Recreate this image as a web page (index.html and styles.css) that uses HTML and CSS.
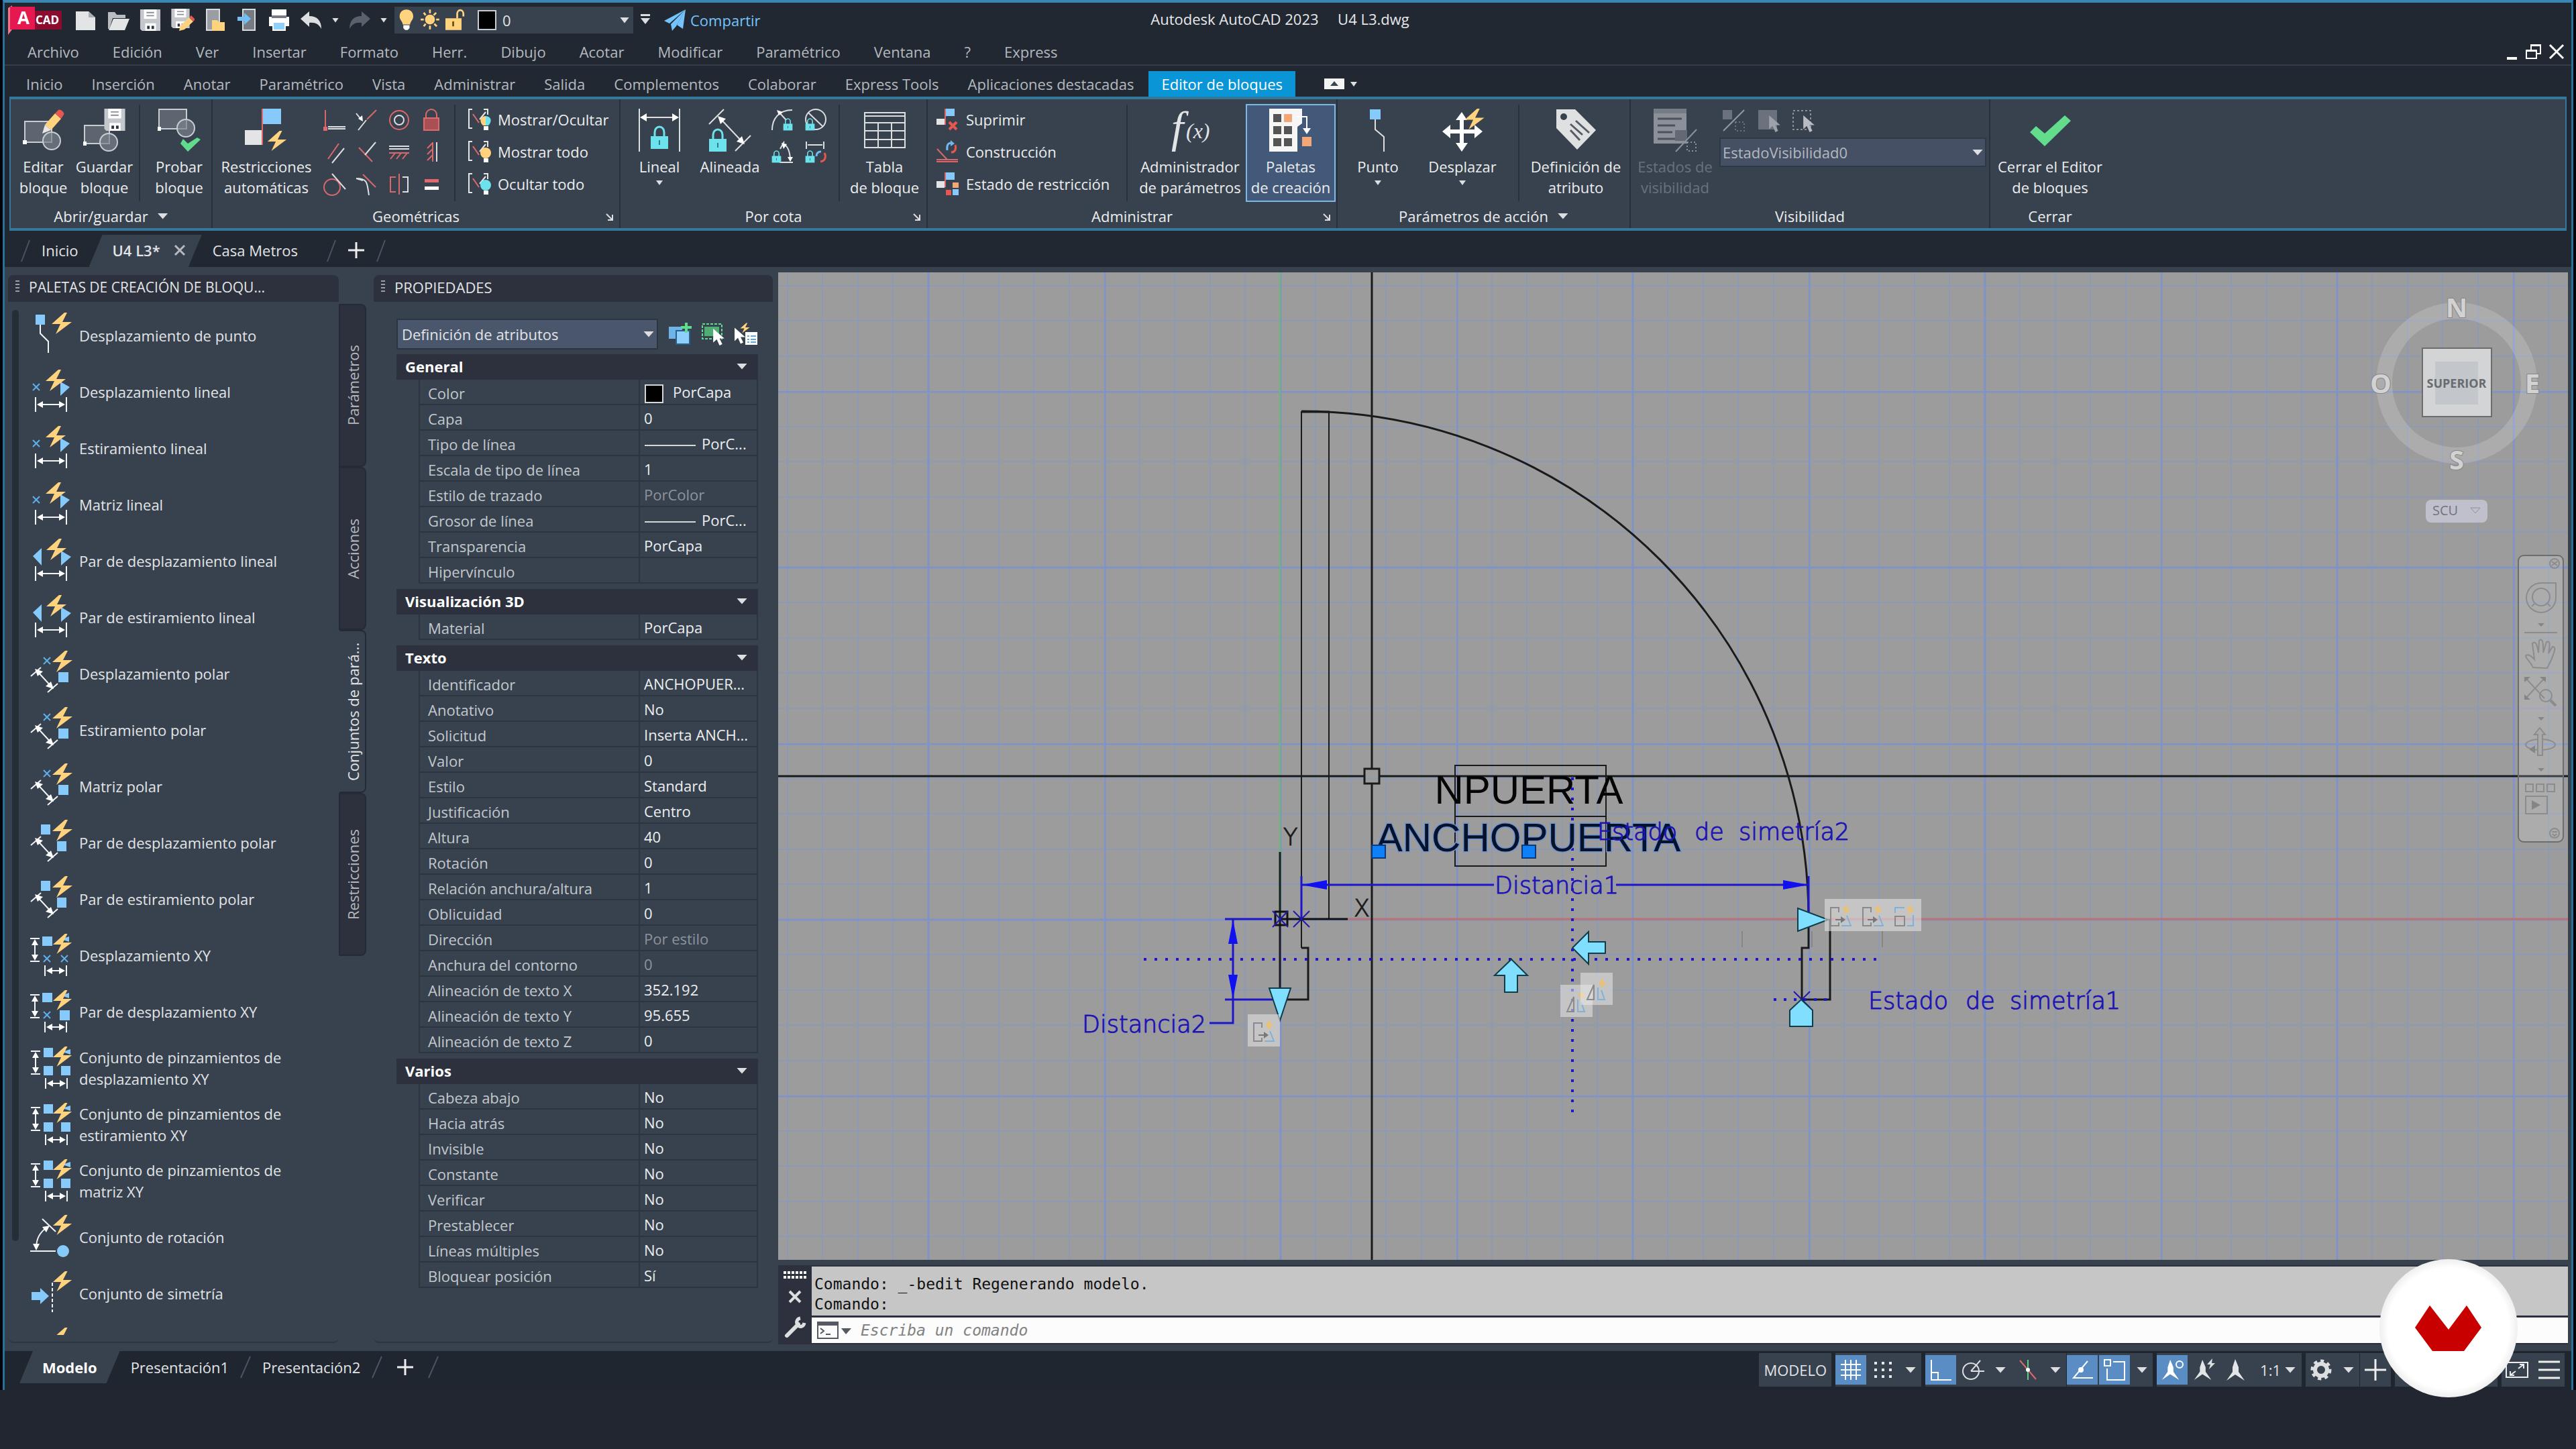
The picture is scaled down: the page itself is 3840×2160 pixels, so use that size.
FILE: index.html
```html
<!DOCTYPE html>
<html lang="es">
<head>
<meta charset="utf-8">
<title>Autodesk AutoCAD 2023 - U4 L3.dwg</title>
<link rel="stylesheet" href="styles.css">
</head>
<body>
<svg class="defs" aria-hidden="true">
  <defs>
    <symbol id="bolt" viewBox="0 0 32 34"><path fill="#ffd27d" d="M20 1L1 18h13L7 33l24-18H17l7-14z"/></symbol>
    <symbol id="floppy" viewBox="0 0 32 34"><path fill="#c4c7cb" d="M0 0h32v34H3l-3-3z"/><path fill="#fff" d="M6 0h20v15H6z"/><path stroke="#8a8f96" stroke-width="2" d="M10 5h12M10 10h12"/><path fill="#fff" d="M8 22h17v12H8z"/><path fill="#30363f" d="M11 26h4v5h-4zM18 26h4v5h-4z"/></symbol>
    <symbol id="lock" viewBox="0 0 28 36"><path fill="none" stroke="#6ce2ec" stroke-width="3" d="M7 17V10a7 8 0 0 1 14 0v7"/><path fill="#6ce2ec" d="M1 16h26v19H1z"/><path stroke="#2a7d88" stroke-width="2" d="M14 22v7"/></symbol>
    <symbol id="bracket" viewBox="0 0 36 36"><path fill="none" stroke="#e4e6e8" stroke-width="2" d="M7 3H2v28h5M24 3h6v8M18 18l9-11"/><path stroke="#e0696b" stroke-width="2" d="M8 10l9 13"/></symbol>
    <symbol id="cursor" viewBox="0 0 16 24"><path d="M0 0v20l5-5 4 9 4-2-4-8h7z"/></symbol>

    <symbol id="p-point" viewBox="0 0 64 72"><path fill="#86c9fb" d="M8 5h14v15H8z"/><path class="ln" d="M15 20v13l12 12v17"/><use href="#bolt" x="31" y="1" width="32" height="34"/></symbol>
    <symbol id="hdim" viewBox="0 0 64 72"><path class="ln" d="M8 44v22M54 44v22M12 55h38"/><path fill="#fff" d="M10 55l9-5v10zM52 55l-9-5v10z"/></symbol>
    <symbol id="p-lineal" viewBox="0 0 64 72"><path stroke="#5fb0ea" stroke-width="2" d="M4 24l10 10M14 24L4 34"/><path fill="#86c9fb" d="M45 21l14 8-14 13z"/><use href="#bolt" x="22" y="2" width="32" height="34"/><use href="#hdim"/></symbol>
    <symbol id="p-pair" viewBox="0 0 64 72"><path fill="#86c9fb" d="M17 17v26L4 29zM46 21l15 9-15 13z"/><use href="#bolt" x="23" y="2" width="32" height="34"/><use href="#hdim"/></symbol>
    <symbol id="pdim" viewBox="0 0 64 72"><path class="ln" d="M1 40l15-13M26 64l15-13M9 31l24 26"/><path fill="#fff" d="M7 29l12 4-8 7zM35 59l-12-4 8-7z"/></symbol>
    <symbol id="p-polar" viewBox="0 0 64 72"><path stroke="#5fb0ea" stroke-width="2" d="M20 12l10 10M30 12L20 22"/><path fill="#86c9fb" d="M42 34h15v15H42z"/><use href="#bolt" x="32" y="1" width="32" height="34"/><use href="#pdim"/></symbol>
    <symbol id="p-ppolar" viewBox="0 0 64 72"><path fill="#86c9fb" d="M16 9h14v15H16zM40 34h14v15H40z"/><use href="#bolt" x="32" y="1" width="32" height="34"/><use href="#pdim"/></symbol>
    <symbol id="xydim" viewBox="0 0 64 72"><path class="ln" d="M0 11h14M0 45h14M7 14v28M22 51v16M54 51v16M26 59h24"/><path fill="#fff" d="M7 12l-5 9h10zM7 44l-5-9h10zM24 59l9-5v10zM52 59l-9-5v10z"/></symbol>
    <symbol id="p-xy" viewBox="0 0 64 72"><path fill="#86c9fb" d="M18 8h15v14H18zM46 12l12-4v8z"/><path stroke="#5fb0ea" stroke-width="2" d="M20 36l10 10M30 36L20 46M46 36l10 10M56 36L46 46"/><use href="#bolt" x="32" y="3" width="32" height="32"/><use href="#xydim"/></symbol>
    <symbol id="p-pxy" viewBox="0 0 64 72"><path fill="#86c9fb" d="M18 8h15v14H18zM46 12l12-4v8zM44 34h15v15H44z"/><path stroke="#5fb0ea" stroke-width="2" d="M20 36l10 10M30 36L20 46"/><use href="#bolt" x="32" y="3" width="32" height="32"/><use href="#xydim"/></symbol>
    <symbol id="p-cxy" viewBox="0 0 64 72"><path fill="#86c9fb" d="M20 6h14v14H20zM48 12l12-4v8zM20 33h14v14H20zM46 33h14v14H46z"/><use href="#bolt" x="32" y="3" width="32" height="32"/><use href="#xydim" x="1"/></symbol>
    <symbol id="p-rot" viewBox="0 0 64 72"><path class="ln" d="M0 57h38M18 9l20 19M9 52c0-14 6-24 17-31"/><path fill="#fff" d="M9 56l-5-10h10zM29 19l-11 2 6 8z"/><circle cx="49" cy="57" r="9" fill="#86c9fb"/><use href="#bolt" x="32" y="2" width="32" height="32"/></symbol>
    <symbol id="p-sim" viewBox="0 0 64 72"><path fill="#86c9fb" d="M2 34h13v-6l13 12-13 12v-6H2z"/><path class="ln" stroke-dasharray="5 3" d="M33 20v44"/><use href="#bolt" x="32" y="2" width="32" height="32"/></symbol>
    <symbol id="act" viewBox="0 0 48 48"><path fill="#e8e8e8" fill-opacity=".55" d="M0 0h48v48H0z"/><path fill="none" stroke="#8a8a8a" stroke-width="2" d="M21 20v-7H9v27h12v-5"/><path stroke="#777" stroke-width="2" d="M16 31h10"/><path fill="#777" d="M24 26l7 5-7 5z"/><path fill="none" stroke="#7fb2da" stroke-width="2" d="M33 25l6 15H25"/><path fill="#efc06a" d="M33 8l-7 9h5l-3 7 11-9h-6z"/></symbol>
    <symbol id="act-scale" viewBox="0 0 48 48"><path fill="#e8e8e8" fill-opacity=".55" d="M0 0h48v48H0z"/><path fill="none" stroke="#8a8a8a" stroke-width="2" d="M9 26h14v14H9z"/><path fill="none" stroke="#7fb2da" stroke-width="2" d="M9 21v-8h14M36 24v16h-9"/><path fill="#efc06a" d="M33 8l-7 9h5l-3 7 11-9h-6z"/></symbol>
    <symbol id="act-flip" viewBox="0 0 48 48"><path fill="#e8e8e8" fill-opacity=".55" d="M0 0h48v48H0z"/><path fill="none" stroke="#8a8a8a" stroke-width="2" d="M20 18v22H10z"/><path fill="none" stroke="#7fb2da" stroke-width="2" d="M26 22v18h10l-5-14"/><path fill="#efc06a" d="M34 8l-8 9h6l-3 7 10-9h-5z"/></symbol>
    <symbol id="person" viewBox="0 0 36 36"><path fill="currentColor" d="M16 2l5 12v7l9 13-14-9-13 9 9-13v-7z"/></symbol>
  </defs>
</svg>

<div class="frame">
<div class="app">

  <header class="titlebar">
    <button class="logo" aria-label="Menú de la aplicación"><svg width="80" height="44" viewBox="0 0 80 44"><path fill="#8c0c30" d="M38 8h42v28H38z"/><path fill="#f0768f" d="M0 4l6-4v36l-6 8z"/><path fill="#e5194f" d="M3 2h37v34H3z"/><text x="14" y="28" font-size="26" font-weight="700" fill="#fff">A</text><text x="41" y="28" font-size="17" font-weight="700" fill="#fff">CAD</text></svg></button>
    <div class="quick">
      <button aria-label="Nuevo"><svg width="36" height="36"><path fill="#e3e4e5" d="M3 5h19l10 9v19H3z"/><path fill="#a9adb2" d="M22 5l10 9H22z"/></svg></button>
      <button aria-label="Abrir"><svg width="36" height="36"><path fill="#b9bcc0" d="M3 6h10l3 4h13v5H10L5 31H3z"/><path fill="#e3e4e5" d="M11 16h24l-7 17H4z"/></svg></button>
      <button aria-label="Guardar"><svg width="36" height="36"><use href="#floppy" x="2" y="2" width="32" height="32"/></svg></button>
      <button aria-label="Guardar como"><svg width="36" height="36"><use href="#floppy" x="1" y="1" width="28" height="29"/><path fill="#ffd27d" d="M13 34l2-8 13-12 6 6-13 12z"/><path fill="#e8574f" d="M28 14l3-3 6 6-3 3z"/></svg></button>
      <button aria-label="Abrir desde web"><svg width="36" height="36"><path fill="#9a9ea4" stroke="#d9dbdd" stroke-width="2" d="M6 2h19v31H6z"/><path fill="#ffd27d" d="M14 18h8l2 3h9v13H14z"/></svg></button>
      <button aria-label="Guardar en web"><svg width="36" height="36"><path fill="#777c84" stroke="#d9dbdd" stroke-width="2" d="M12 2h18v31H12z"/><path fill="#6fc0fa" d="M4 13h10V7l10 9-10 9v-6H4z"/></svg></button>
      <button aria-label="Trazar"><svg width="36" height="36"><path fill="#fff" d="M7 2h22v9H7zM3 13h30v14H3z"/><path fill="#777c84" d="M7 11h22v4H7z"/><path fill="#8fd0ff" stroke="#fff" stroke-width="2" d="M9 21h18v12H9z"/></svg></button>
      <button aria-label="Deshacer"><svg width="36" height="36"><path fill="#dcdee0" d="M2 16L15 5v7c12 0 18 7 18 19-4-7-9-10-18-9v6z"/></svg></button>
      <button aria-label="Lista deshacer" class="mini"><i class="tri"></i></button>
      <button aria-label="Rehacer"><svg width="36" height="36"><path fill="#5a616c" d="M34 16L21 5v7C9 12 3 19 3 31c4-7 9-10 18-9v6z"/></svg></button>
      <button aria-label="Lista rehacer" class="mini"><i class="tri"></i></button>
    </div>
    <div class="layerbox">
      <svg width="130" height="36" viewBox="0 0 130 36"><path fill="#ffd27d" d="M15 1c8 0 11 6 11 11 0 6-5 8-5 13H9C9 20 4 18 4 12 4 7 7 1 15 1z"/><path fill="#fff" d="M10 26h10v5l-3 3h-4l-3-3z"/><circle cx="53" cy="17" r="8" fill="#ffd27d"/><path stroke="#ffd27d" stroke-width="3" d="M53 1v6M53 27v6M38 17h5M63 17h5M43 6l3 4M60 24l4 4M63 6l-4 4M43 28l3-4"/><path fill="#ffd27d" d="M78 15h26v19H78z"/><path fill="none" stroke="#ffd27d" stroke-width="3" d="M97 15V8a5 6 0 0 1 10 0v4"/><path fill="#6b4f12" d="M89 20h3v8h-3z"/></svg>
      <span class="swatch"></span>
      <select aria-label="Capa actual"><option>0</option></select><i class="tri"></i>
    </div>
    <button class="more" aria-label="Personalizar barra"><svg width="20" height="20"><path fill="#dcdee0" d="M3 1h14v3H3zM3 7h14l-7 9z"/></svg></button>
    <a class="share" href="#"><svg width="34" height="34"><path fill="#74c4fb" d="M33 1L1 18l8 4zM33 1L11 23l2 10 6-7zM33 1l-4 29-9-6z"/></svg>Compartir</a>
    <div class="doc-title">Autodesk AutoCAD 2023 &nbsp;&nbsp;&nbsp; U4 L3.dwg</div>
  </header>

  <nav class="menubar" aria-label="Menús">
    <button>Archivo</button><button>Edición</button><button>Ver</button><button>Insertar</button><button>Formato</button><button>Herr.</button><button>Dibujo</button><button>Acotar</button><button>Modificar</button><button>Paramétrico</button><button>Ventana</button><button>?</button><button>Express</button>
    <div class="wincontrols">
      <button aria-label="Minimizar"><svg width="24" height="30"><path fill="#fff" d="M5 23h15v4H5z"/></svg></button>
      <button aria-label="Restaurar"><svg width="26" height="30"><path fill="none" stroke="#fff" stroke-width="2" d="M9 12V5h14v13h-5M2 13h15v12H2z"/><path fill="#fff" d="M9 4h15v3H9zM2 12h16v3H2z"/></svg></button>
      <button aria-label="Cerrar"><svg width="26" height="30"><path stroke="#fff" stroke-width="3" d="M3 5l20 20M23 5L3 25"/></svg></button>
    </div>
  </nav>

  <nav class="ribbon-tabs" aria-label="Fichas">
    <button>Inicio</button><button>Inserción</button><button>Anotar</button><button>Paramétrico</button><button>Vista</button><button>Administrar</button><button>Salida</button><button>Complementos</button><button>Colaborar</button><button>Express Tools</button><button>Aplicaciones destacadas</button><button class="active">Editor de bloques</button>
    <button class="collapse" aria-label="Minimizar cinta"><svg width="54" height="20"><path fill="#f4f4f4" d="M1 2h30v16H1z"/><path fill="#3a4350" d="M16 6l6 7H10z"/><path fill="#dcdee0" d="M40 7h10l-5 7z"/></svg></button>
  </nav>

  <section class="ribbon">
    <div class="panel w301">
      <div class="panel-body">
        <button class="big w92"><svg class="ic"><path fill="#5d6570" stroke="#c9ccd0" stroke-width="2" d="M4 21h40v31H4z"/><circle cx="44" cy="50" r="13" fill="#7a818b" fill-opacity=".7" stroke="#c9ccd0" stroke-width="2"/><path fill="#fff" d="M1 49h6v6H1z"/><path fill="#ffd27d" d="M34 26l15-17 9 8-15 17z"/><path fill="#e6e6e6" d="M34 26l9 8-13 5z"/><path fill="#e8574f" d="M49 9l5-5c3-2 10 4 8 7l-4 6z"/></svg>Editar<br>bloque</button>
        <button class="big w92"><svg class="ic"><path fill="#5d6570" stroke="#c9ccd0" stroke-width="2" d="M2 27h37v27H2z"/><circle cx="38" cy="52" r="13" fill="#7a818b" fill-opacity=".7" stroke="#c9ccd0" stroke-width="2"/><path fill="#fff" d="M0 51h5v6H0z"/><use href="#floppy" x="31" y="2" width="32" height="33"/></svg>Guardar<br>bloque</button>
        <hr>
        <button class="big w108"><svg class="ic"><path fill="#5d6570" stroke="#c9ccd0" stroke-width="2" d="M2 3h41v29H2z"/><circle cx="42" cy="31" r="13" fill="#7a818b" fill-opacity=".7" stroke="#c9ccd0" stroke-width="2"/><path fill="#fff" d="M0 29h5v6H0z"/><path fill="#5fdc8c" d="M34 54l4-7 7 7 14-9 5 3-19 18z"/></svg>Probar<br>bloque</button>
      </div>
      <div class="panel-title">Abrir/guardar <i class="tri lg"></i></div>
    </div>

    <div class="panel w608">
      <div class="panel-body">
        <button class="big w160"><svg class="ic"><path fill="#86c9fb" d="M27 2h27v23H27z"/><path fill="#e3e4e5" d="M0 34h25v22H0z"/><path stroke="#e0696b" stroke-width="2" d="M26 2v54"/><use href="#bolt" x="32" y="34" width="32" height="32"/></svg>Restricciones<br>automáticas</button>
        <div class="grid4">
          <button aria-label="Coincidente"><svg class="sm"><path class="rd" d="M4 3v26"/><path fill="#e0696b" d="M1 28h6v6H1z"/><path class="wt" d="M8 31h26M8 28h26"/></svg></button>
          <button aria-label="Colineal"><svg class="sm"><path class="wt" d="M2 8l8 10M5 33l12-15"/><path class="rd" d="M18 17L32 3"/><path fill="#fff" d="M12 20l-1-9-6 5z"/></svg></button>
          <button aria-label="Concéntrica"><svg class="sm"><circle class="rd" cx="18" cy="18" r="14"/><circle class="wt" cx="18" cy="18" r="7"/></svg></button>
          <button aria-label="Fija"><svg class="sm"><path class="rd" d="M10 16V10a8 8 0 0 1 16 0v6"/><path fill="#a94f55" stroke="#e0696b" stroke-width="2" d="M7 15h22v18H7z"/></svg></button>
          <button aria-label="Paralela"><svg class="sm"><path class="rd" d="M8 28L24 5"/><path class="wt" d="M14 34L32 12"/></svg></button>
          <button aria-label="Perpendicular"><svg class="sm"><path class="rd" d="M6 11l20 21"/><path class="wt" d="M15 22L31 3"/></svg></button>
          <button aria-label="Horizontal"><svg class="sm"><path class="wt" d="M3 9h30M3 13h30"/><path class="rd" d="M3 19h30M12 19L5 28M21 19l-7 9M30 19l-7 9"/></svg></button>
          <button aria-label="Vertical"><svg class="sm"><path class="rd" d="M20 3v29M20 4l-8 8M20 13l-8 8M20 22l-8 8"/><path class="wt" d="M26 3v29"/></svg></button>
          <button aria-label="Tangente"><svg class="sm"><circle class="rd" cx="14" cy="22" r="12"/><path class="wt" d="M14 2l20 23"/></svg></button>
          <button aria-label="Suave"><svg class="sm"><path class="wt" d="M2 9c18 0 16 8 19 25M2 9l10 3"/><path class="rd" d="M12 3l19 19"/></svg></button>
          <button aria-label="Simétrica"><svg class="sm"><path class="rd" d="M13 7H5v22h8M18 2v31"/><path class="wt" d="M23 7h8v22h-8"/></svg></button>
          <button aria-label="Igual"><svg class="sm"><path fill="#e0696b" d="M8 10h21v5H8z"/><path fill="#fff" d="M8 21h21v5H8z"/></svg></button>
        </div>
        <hr>
        <div class="rows">
          <button><svg class="sm"><use href="#bracket"/><path fill="#ffd27d" d="M27 13c-11 1-8 11-4 14h4z"/><path fill="#6ce2ec" d="M27 13c11 1 8 11 4 14h-4z"/><path fill="#fff" d="M24 28h7v6h-7z"/></svg>Mostrar/Ocultar</button>
          <button><svg class="sm"><use href="#bracket"/><circle cx="27" cy="20" r="8" fill="#ffd27d"/><path fill="#fff" d="M24 28h7v6h-7z"/></svg>Mostrar todo</button>
          <button><svg class="sm"><use href="#bracket"/><circle cx="27" cy="20" r="8" fill="#6ce2ec"/><path fill="#fff" d="M24 28h7v6h-7z"/></svg>Ocultar todo</button>
        </div>
      </div>
      <div class="panel-title">Geométricas<button class="launcher" aria-label="Configuración"><svg width="12" height="12"><path fill="none" stroke="#dcdee0" stroke-width="2" d="M1 1l8 8M10 2v8H3"/></svg></button></div>
    </div>

    <div class="panel w458">
      <div class="panel-body">
        <button class="big w116"><svg class="ic"><path class="wt" d="M2 2v64M62 2v64M6 15h52"/><path fill="#fff" d="M3 15l10-6v12zM61 15l-10-6v12z"/><use href="#lock" x="18" y="27" width="28" height="36"/></svg>Lineal<i class="tri"></i></button>
        <button class="big w94"><svg class="ic"><path class="wt" d="M1 25L23 3M40 65l23-23M17 16l34 36"/><path fill="#fff" d="M14 13l12 4-8 8zM54 55l-12-4 8-8z"/><use href="#lock" x="0" y="31" width="28" height="36"/></svg>Alineada</button>
        <div class="grid2">
          <button aria-label="Radio"><svg class="sm"><path class="wt" d="M2 33C2 16 12 3 32 3M12 6l11 12"/><path fill="#fff" d="M9 3l9 3-6 5z"/><use href="#lock" x="18" y="15" width="15" height="19"/></svg></button>
          <button aria-label="Diámetro"><svg class="sm"><circle class="wt" cx="19" cy="17" r="15"/><path class="wt" d="M8 7l22 21"/><use href="#lock" x="3" y="15" width="15" height="19"/></svg></button>
          <button aria-label="Angular"><svg class="sm"><path class="wt" d="M13 33h20M20 2L14 13M20 6c7 5 9 15 9 25"/><path fill="#fff" d="M16 4l8 2-5 7zM25 25h8l-4 7z"/><use href="#lock" x="1" y="15" width="15" height="19"/></svg></button>
          <button aria-label="Convertir"><svg class="sm"><path class="wt" d="M5 2v11M31 2v11M7 7h22"/><path fill="none" stroke="#6fb8f0" stroke-width="3" d="M20 24c0-5 3-7 7-7"/><path fill="none" stroke="#e8574f" stroke-width="3" d="M32 19c3 6 1 12-6 13"/><use href="#lock" x="3" y="15" width="15" height="19"/></svg></button>
        </div>
        <hr>
        <button class="big w133"><svg class="ic"><path fill="none" stroke="#dcdee0" stroke-width="2" d="M2 8h60v52H2zM2 13h60M2 23h60M2 35h60M2 48h60M22 23v37M42 23v37"/></svg>Tabla<br>de bloque</button>
      </div>
      <div class="panel-title">Por cota<button class="launcher" aria-label="Configuración"><svg width="12" height="12"><path fill="none" stroke="#dcdee0" stroke-width="2" d="M1 1l8 8M10 2v8H3"/></svg></button></div>
    </div>

    <div class="panel w611">
      <div class="panel-body">
        <div class="rows first">
          <button><svg class="sm"><path fill="#86c9fb" d="M15 2h13v11H15z"/><path fill="#e3e4e5" d="M1 17h12v9H1z"/><path class="rd" d="M14 2v24"/><path stroke="#e8574f" stroke-width="4" d="M20 22l11 11M31 22L20 33"/></svg>Suprimir</button>
          <button><svg class="sm"><path class="rd" d="M2 14l15 16M1 33h32M1 30h32"/><path fill="none" stroke="#6fb8f0" stroke-width="3" d="M17 16c-1-7 1-11 6-11"/><path fill="#6fb8f0" d="M22 1l6 5-6 4z"/><path fill="none" stroke="#e8574f" stroke-width="3" d="M29 8c2 7-1 11-6 11"/></svg>Construcción</button>
          <button><svg class="sm"><path fill="#86c9fb" d="M15 1h13v11H15zM25 26h9v9h-9z"/><path fill="#e3e4e5" d="M1 14h12v10H1z"/><path class="rd" d="M14 1v22"/><path fill="#f0a878" d="M25 16h9v8h-9z"/><path fill="#e8574f" d="M15 27h8v8h-8z"/></svg>Estado de restricción</button>
        </div>
        <hr>
        <button class="big w158"><svg class="ic"><text x="4" y="52" class="fx" font-size="66">f</text><text x="26" y="46" class="fx" font-size="32">(x)</text></svg>Administrador<br>de parámetros</button>
        <button class="big w134 pressed"><svg class="ic"><path fill="#f6f6f6" d="M0 2h49v22l-7 5v37H0z"/><path fill="#555" d="M6 10h12v12H6zM6 28h12v12H6zM22 28h12v12H22zM6 46h12v12H6zM22 46h12v12H22z"/><path fill="#f3a678" d="M22 10h12v12H22zM49 44h14v14H49z"/><path fill="none" stroke="#fff" stroke-width="2" d="M42 14h14v20"/><path fill="#fff" d="M50 31h12l-6 9z"/></svg>Paletas<br>de creación</button>
      </div>
      <div class="panel-title">Administrar<button class="launcher" aria-label="Configuración"><svg width="12" height="12"><path fill="none" stroke="#dcdee0" stroke-width="2" d="M1 1l8 8M10 2v8H3"/></svg></button></div>
    </div>

    <div class="panel w437">
      <div class="panel-body">
        <button class="big w120"><svg class="ic"><path fill="#86c9fb" d="M20 3h16v15H20z"/><path class="wt" d="M28 18v15l13 11v22"/></svg>Punto<i class="tri"></i></button>
        <button class="big w132"><svg class="ic"><path fill="#fff" d="M28 33V19h-6l9-12 8 12h-5v14h16v-7l12 10-12 10v-7H34v14h6l-9 13-9-13h6V39H14v7L2 36l12-10v7z"/><use href="#bolt" x="34" y="1" width="32" height="33"/></svg>Desplazar<i class="tri"></i></button>
        <hr>
        <button class="big w168"><svg class="ic"><path fill="#dfe0e1" d="M3 3h28l31 31-28 29L3 31z"/><circle cx="14" cy="14" r="5" fill="#38424f"/><path stroke="#555c66" stroke-width="3" d="M24 25l18 16M24 34l14 15M32 20l20 18"/></svg>Definición de<br>atributo</button>
      </div>
      <div class="panel-title">Parámetros de acción <i class="tri lg"></i></div>
    </div>

    <div class="panel w536">
      <div class="panel-body">
        <button class="big w132 disabled" disabled><svg class="ic"><path fill="#8b9099" d="M0 2h49v52H0z"/><path fill="#767c86" d="M0 2h49v7H0z"/><path stroke="#4b525d" stroke-width="3" d="M6 17h36M6 27h26M6 37h22M6 47h36"/><path fill="#626975" d="M32 34h18v16H32z"/><path stroke="#8b9099" stroke-width="2" d="M33 66l31-33"/><path fill="none" stroke="#8b9099" stroke-width="2" stroke-dasharray="2 3" d="M50 52h13v13H50z"/></svg>Estados de<br>visibilidad</button>
        <div class="vis">
          <div class="vis-icons">
            <button aria-label="Modo de visibilidad" disabled><svg class="sm"><path fill="#6c727d" d="M1 3h14v14H1z"/><path stroke="#9499a1" stroke-width="2" d="M2 34L33 3"/><path fill="none" stroke="#6c727d" stroke-width="2" stroke-dasharray="2 3" d="M20 21h13v13H20z"/></svg></button>
            <button aria-label="Hacer visible" disabled><svg class="sm"><path fill="#6c727d" d="M2 3h28v29H2z"/><use href="#cursor" x="18" y="11" width="17" height="25" fill="#9da1a9"/></svg></button>
            <button aria-label="Hacer invisible" disabled><svg class="sm"><path fill="none" stroke="#8b9099" stroke-width="2" stroke-dasharray="3 3" d="M2 4h26v28H2z"/><use href="#cursor" x="17" y="11" width="17" height="25" fill="#b9bcc2"/></svg></button>
          </div>
          <div class="vis-select"><select aria-label="Estado de visibilidad"><option>EstadoVisibilidad0</option></select><i class="tri lg"></i></div>
        </div>
      </div>
      <div class="panel-title">Visibilidad</div>
    </div>

    <div class="panel w178">
      <div class="panel-body">
        <button class="big w178"><svg class="ic"><path fill="#63dc8c" d="M2 37l9-9 13 11 30-27 9 8-39 38z"/></svg>Cerrar el Editor<br>de bloques</button>
      </div>
      <div class="panel-title">Cerrar</div>
    </div>
  </section>

  <nav class="doc-tabs" aria-label="Dibujos">
    <svg class="slash" width="16" height="36"><path d="M14 2L2 34"/></svg>
    <button class="dt">Inicio</button>
    <button class="dt active">U4 L3*<svg width="18" height="18"><path stroke="#b6babf" stroke-width="3" d="M2 2l14 14M16 2L2 16"/></svg></button>
    <button class="dt">Casa Metros</button>
    <svg class="slash gap" width="16" height="36"><path d="M14 2L2 34"/></svg>
    <button class="dt plus" aria-label="Nuevo dibujo"><svg width="26" height="26"><path stroke="#eee" stroke-width="3" d="M13 1v24M1 13h24"/></svg></button>
    <svg class="slash" width="16" height="36"><path d="M14 2L2 34"/></svg>
  </nav>

  <main class="workspace">
    <aside class="palette authoring">
      <div class="pal-main">
        <h2 class="pal-head"><span class="grip"></span>PALETAS DE CREACIÓN DE BLOQU...</h2>
        <div class="pal-body">
          <div class="scroll"></div>
          <ul class="tools">
            <li><svg><use href="#p-point"/></svg><span>Desplazamiento de punto</span></li>
            <li><svg><use href="#p-lineal"/></svg><span>Desplazamiento lineal</span></li>
            <li><svg><use href="#p-lineal"/></svg><span>Estiramiento lineal</span></li>
            <li><svg><use href="#p-lineal"/></svg><span>Matriz lineal</span></li>
            <li><svg><use href="#p-pair"/></svg><span>Par de desplazamiento lineal</span></li>
            <li><svg><use href="#p-pair"/></svg><span>Par de estiramiento lineal</span></li>
            <li><svg><use href="#p-polar"/></svg><span>Desplazamiento polar</span></li>
            <li><svg><use href="#p-polar"/></svg><span>Estiramiento polar</span></li>
            <li><svg><use href="#p-polar"/></svg><span>Matriz polar</span></li>
            <li><svg><use href="#p-ppolar"/></svg><span>Par de desplazamiento polar</span></li>
            <li><svg><use href="#p-ppolar"/></svg><span>Par de estiramiento polar</span></li>
            <li><svg><use href="#p-xy"/></svg><span>Desplazamiento XY</span></li>
            <li><svg><use href="#p-pxy"/></svg><span>Par de desplazamiento XY</span></li>
            <li><svg><use href="#p-cxy"/></svg><span>Conjunto de pinzamientos de desplazamiento XY</span></li>
            <li><svg><use href="#p-cxy"/></svg><span>Conjunto de pinzamientos de estiramiento XY</span></li>
            <li><svg><use href="#p-cxy"/></svg><span>Conjunto de pinzamientos de<br>matriz XY</span></li>
            <li><svg><use href="#p-rot"/></svg><span>Conjunto de rotación</span></li>
            <li><svg><use href="#p-sim"/></svg><span>Conjunto de simetría</span></li>
            <li><svg><use href="#p-sim"/></svg><span></span></li>
          </ul>
        </div>
      </div>
      <div class="side-tabs">
        <button>Parámetros</button><button>Acciones</button><button class="active">Conjuntos de pará...</button><button>Restricciones</button>
      </div>
    </aside>

    <aside class="palette props">
      <h2 class="pal-head"><span class="grip"></span>PROPIEDADES</h2>
      <div class="pal-body">
        <div class="props-top">
          <div class="type-select"><select aria-label="Tipo de objeto"><option>Definición de atributos</option></select><i class="tri lg"></i></div>
          <button aria-label="Alternar PICKADD"><svg class="sm"><path fill="#6fb4e8" d="M1 7h20v18H1z"/><path fill="#8fcffc" stroke="#2b5f88" stroke-width="2" d="M12 13h20v20H12z"/><path stroke="#5fdc8c" stroke-width="4" d="M27 1v15M19 8h16"/></svg></button>
          <button aria-label="Designar objetos"><svg class="sm"><path fill="#4fae74" d="M5 7h22v14H5z"/><path fill="none" stroke="#5fdc8c" stroke-width="2" stroke-dasharray="4 2" d="M2 3h29v22H2z"/><use href="#cursor" x="18" y="10" width="17" height="25" fill="#fff"/></svg></button>
          <button aria-label="Selección rápida"><svg class="sm"><use href="#cursor" x="1" y="8" width="16" height="25" fill="#fff"/><use href="#bolt" x="9" y="1" width="15" height="16"/><path fill="#fff" d="M17 15h18v19H17z"/><path stroke="#5fa8e0" stroke-width="2" d="M20 21h3M25 21h8M20 26h3M25 26h8M20 30h3M25 30h8"/></svg></button>
        </div>
        <section><button class="sec">General<i class="tri lg"></i></button>
        <table>
          <tr><th>Color</th><td><span class="chip"></span>PorCapa</td></tr>
          <tr><th>Capa</th><td>0</td></tr>
          <tr><th>Tipo de línea</th><td><span class="dash"></span>PorC...</td></tr>
          <tr><th>Escala de tipo de línea</th><td>1</td></tr>
          <tr><th>Estilo de trazado</th><td class="dim">PorColor</td></tr>
          <tr><th>Grosor de línea</th><td><span class="dash"></span>PorC...</td></tr>
          <tr><th>Transparencia</th><td>PorCapa</td></tr>
          <tr><th>Hipervínculo</th><td></td></tr>
        </table></section>
        <section><button class="sec">Visualización 3D<i class="tri lg"></i></button>
        <table><tr><th>Material</th><td>PorCapa</td></tr></table></section>
        <section><button class="sec">Texto<i class="tri lg"></i></button>
        <table>
          <tr><th>Identificador</th><td>ANCHOPUER...</td></tr>
          <tr><th>Anotativo</th><td>No</td></tr>
          <tr><th>Solicitud</th><td>Inserta ANCH...</td></tr>
          <tr><th>Valor</th><td>0</td></tr>
          <tr><th>Estilo</th><td>Standard</td></tr>
          <tr><th>Justificación</th><td>Centro</td></tr>
          <tr><th>Altura</th><td>40</td></tr>
          <tr><th>Rotación</th><td>0</td></tr>
          <tr><th>Relación anchura/altura</th><td>1</td></tr>
          <tr><th>Oblicuidad</th><td>0</td></tr>
          <tr><th>Dirección</th><td class="dim">Por estilo</td></tr>
          <tr><th>Anchura del contorno</th><td class="dim">0</td></tr>
          <tr><th>Alineación de texto X</th><td>352.192</td></tr>
          <tr><th>Alineación de texto Y</th><td>95.655</td></tr>
          <tr><th>Alineación de texto Z</th><td>0</td></tr>
        </table></section>
        <section><button class="sec">Varios<i class="tri lg"></i></button>
        <table>
          <tr><th>Cabeza abajo</th><td>No</td></tr>
          <tr><th>Hacia atrás</th><td>No</td></tr>
          <tr><th>Invisible</th><td>No</td></tr>
          <tr><th>Constante</th><td>No</td></tr>
          <tr><th>Verificar</th><td>No</td></tr>
          <tr><th>Prestablecer</th><td>No</td></tr>
          <tr><th>Líneas múltiples</th><td>No</td></tr>
          <tr><th>Bloquear posición</th><td>Sí</td></tr>
        </table></section>
      </div>
    </aside>

    <div class="stage">
      <div class="canvas">
        <svg class="drawing" viewBox="1160 406 2668 1472" preserveAspectRatio="xMinYMin slice">
          <defs>
            <pattern id="grid" x="1646" y="583" width="525" height="525" patternUnits="userSpaceOnUse">
              <path stroke="#7f95cc" stroke-opacity=".5" stroke-width="2" d="M53 0v525M105 0v525M158 0v525M210 0v525M315 0v525M368 0v525M420 0v525M473 0v525M0 53h525M0 105h525M0 158h525M0 210h525M0 315h525M0 368h525M0 420h525M0 473h525"/>
              <path stroke="#7b92d0" stroke-opacity=".85" stroke-width="3" d="M1 0v525M263 0v525M0 1h525M0 263h525"/>
            </pattern>
          </defs>
          <rect x="1160" y="406" width="2668" height="1472" fill="#9c9c9c"/>
          <rect x="1160" y="406" width="2668" height="1472" fill="url(#grid)"/>
          <path stroke="#6cb86c" stroke-width="2" d="M1908 406v864"/>
          <path stroke="#bd7272" stroke-width="3" d="M2009 1370h1819"/>
          <path stroke="#868686" stroke-width="2" d="M2597 1388v24M2701 1388v24M2806 1388v24"/>

          <g fill="none" stroke="#1a1a1a" stroke-width="2">
            <path d="M1940 1413V613M1981 1369V613"/>
            <path stroke-width="3" d="M1940 613A756 756 0 0 1 2696 1369V1413H2686V1490H2728V1370"/>
            <path stroke-width="3" d="M1940 614h42"/>
            <path stroke-width="3" d="M1940 1413h10v77h-42v-120"/>
            <path d="M2169 1141h225v150h-225zM2169 1217h225"/>
            <path stroke-width="3" d="M1160 1157h874M2056 1157h1772M2045 406v740M2045 1168v710M2034 1146h22v22h-22z"/>
          </g>

          <g stroke="#1e14c8" stroke-width="3" fill="none">
            <path stroke-dasharray="4 12" stroke-width="4" d="M1705 1430h1100"/>
            <path stroke-dasharray="4 11" stroke-width="4" d="M2344 1159v510M2644 1490h86"/>
            <path d="M1940 1319h287M2409 1319h287M1940 1306v64M2696 1306v64"/>
            <path d="M1838 1370v155h-35M1826 1370h70M1826 1490h72"/>
          </g>
          <path fill="#1010f0" d="M1940 1319l38-7v14zM2696 1319l-38-7v14zM1838 1371l-7 36h14zM1838 1489l-7-36h14z"/>

          <text class="cad" text-anchor="middle" x="2279" y="1198">NPUERTA</text>
          <text class="cad sel" text-anchor="middle" x="2278" y="1269">ANCHOPUERTA</text>
          <g class="stroke-font">
            <text y="1252"><tspan x="2381">Estado</tspan> <tspan x="2526">de</tspan> <tspan x="2592">simetría2</tspan></text>
            <text y="1504"><tspan x="2785">Estado</tspan> <tspan x="2930">de</tspan> <tspan x="2996">simetría1</tspan></text>
            <text x="2228" y="1332">Distancia1</text>
            <text x="1613" y="1539">Distancia2</text>
          </g>
          <g class="ucs-font"><text x="1913" y="1260">Y</text><text x="2018" y="1366">X</text></g>

          <path fill="#1080f8" stroke="#0a3a78" stroke-width="2" d="M2045 1260h20v19h-20zM2269 1260h20v19h-20z"/>
          <g fill="none" stroke-width="3">
            <path stroke="#10240f" d="M1908 1370v-100"/>
            <path stroke="#111" d="M1901 1359h18v20h-18zM1908 1370h101"/>
            <path stroke="#2118a8" stroke-width="2" d="M1897 1358l23 24M1920 1358l-23 24M1928 1358l24 24M1952 1358l-24 24M2674 1478l24 24M2698 1478l-24 24"/>
          </g>
          <g fill="#80deff" stroke="#123c48" stroke-width="2">
            <path d="M2680 1354v34l45-17z"/>
            <path d="M1892 1473h32l-16 48z"/>
            <path d="M2344 1413l24-24v15h25v17h-25v16z"/>
            <path d="M2253 1430l24 24h-15v25h-19v-25h-15z"/>
            <path d="M2668 1530v-24l17-16 17 16v24z"/>
          </g>
          <use href="#act" x="1860" y="1512" width="48" height="48"/>
          <use href="#act-flip" x="2326" y="1468" width="48" height="48"/>
          <use href="#act-flip" x="2356" y="1450" width="48" height="48"/>
          <use href="#act" x="2720" y="1340" width="48" height="48"/>
          <use href="#act" x="2768" y="1340" width="48" height="48"/>
          <use href="#act-scale" x="2816" y="1340" width="48" height="48"/>
        </svg>

        <svg class="viewcube" viewBox="0 0 260 290" width="260" height="290">
          <circle cx="130" cy="141" r="108" fill="none" stroke="#fff" stroke-opacity=".17" stroke-width="24"/>
          <path fill="#d3d4d5" stroke="#6d6d6d" stroke-width="2" d="M79 89h103v102H79z"/>
          <path fill="#c3c6ca" d="M98 109h64v64H98z"/>
          <text x="130" y="148" class="cube">SUPERIOR</text>
          <g class="compass"><text x="130" y="43">N</text><text x="130" y="270">S</text><text x="17" y="156">O</text><text x="243" y="156">E</text></g>
        </svg>
        <button class="ucs-menu">SCU<svg width="18" height="12"><path fill="none" stroke="#8d929c" stroke-width="1" d="M2 2h14l-7 8z"/></svg></button>

        <svg class="navbar" viewBox="0 0 70 430" width="70" height="430">
          <rect x="1" y="1" width="67" height="427" rx="8" fill="#fff" fill-opacity=".16" stroke="#6d6d6d" stroke-width="2"/>
          <g fill="none" stroke="#8c8c8c" stroke-width="2">
            <circle cx="55" cy="13" r="7"/><path d="M51 10l8 6M59 10l-8 6"/>
            <path d="M57 42v22a22 22 0 1 1-22-22z"/><circle cx="35" cy="63" r="13"/><path d="M25 73l-4 4M45 73l4 4M10 116h49"/>
            <path d="M23 168C19 158 12 156 12 150c5-3 10 3 13 6l-3-24c5-4 7 2 9 14l1-18c4-4 7 0 6 18l5-16c5-2 6 2 3 17l6-10c6 0 3 7-2 20l-6 12z"/>
            <path d="M12 184l28 30M12 214l28-30"/><circle cx="42" cy="210" r="9"/><path stroke-width="4" d="M49 217l8 8"/>
            <ellipse cx="34" cy="283" rx="22" ry="8"/><path fill="#aaa" d="M30 299v-31h-5l8-10 8 10h-4v31z"/>
            <path d="M12 342h11v11H12zM28 342h11v11H28zM44 342h11v11H44zM12 360h32v26H12z"/>
            <circle cx="55" cy="415" r="7"/><path d="M51 413h8M52 416l3 3 3-3"/>
          </g>
          <path fill="#858585" d="M30 102h10l-5 5zM30 242h10l-5 5zM30 318h10l-5 5zM17 290l9-6v12zM21 366l13 7-13 7zM10 182h9l-9 8zM42 182h-9l9 8zM10 216h9l-9-8z"/>
        </svg>
      </div>

      <div class="command">
        <div class="cmd-side">
          <svg width="34" height="14"><path stroke="#fff" stroke-width="4" stroke-dasharray="4 2" d="M0 3h34M0 10h34"/></svg>
          <button aria-label="Cerrar línea de comandos"><svg width="22" height="22"><path stroke="#dcdee0" stroke-width="4" d="M3 3l16 16M19 3L3 19"/></svg></button>
          <button aria-label="Personalizar"><svg width="34" height="34"><path stroke="#dcdee0" stroke-width="6" stroke-linecap="round" d="M5 29l17-17"/><path fill="none" stroke="#dcdee0" stroke-width="5" d="M25 3c-5 1-7 6-4 10s9 3 10-3"/></svg></button>
        </div>
        <div class="cmd-main">
          <div class="cmd-log">Comando: _-bedit Regenerando modelo.<br>Comando:</div>
          <div class="cmd-line">
            <svg width="54" height="28"><path fill="none" stroke="#555a62" stroke-width="2" d="M2 2h30v24H2z"/><path fill="#555a62" d="M2 2h30v5H2z"/><path fill="none" stroke="#555a62" stroke-width="2" d="M6 11l5 4-5 4M14 20h7"/><path fill="#555a62" d="M37 11h15l-8 9z"/></svg>
            <input type="text" placeholder="Escriba un comando" aria-label="Línea de comandos">
          </div>
        </div>
      </div>
    </div>
  </main>

  <footer class="status">
    <div class="layouts">
      <button class="active">Modelo</button>
      <button>Presentación1</button>
      <svg class="slash" width="18" height="36"><path d="M16 2L2 34"/></svg>
      <button>Presentación2</button>
      <svg class="slash" width="18" height="36"><path d="M16 2L2 34"/></svg>
      <button class="plus" aria-label="Nueva presentación"><svg width="26" height="26"><path stroke="#eee" stroke-width="3" d="M13 1v24M1 13h24"/></svg></button>
      <svg class="slash" width="18" height="36"><path d="M16 2L2 34"/></svg>
    </div>
    <div class="toggles">
      <div class="grp"><button class="model">MODELO</button></div>
      <div class="grp">
        <button class="on" aria-label="Rejilla"><svg class="sm"><path class="wt" d="M10 3v30M18 3v30M26 3v30M3 10h30M3 18h30M3 26h30"/></svg></button>
        <button aria-label="Forzar cursor"><svg class="sm"><path stroke="#e4e6e8" stroke-width="4" stroke-dasharray="4 7" d="M5 8h28M5 18h28M5 28h28"/></svg></button>
        <button class="arr" aria-label="Opciones"><i class="tri lg"></i></button>
      </div>
      <div class="grp">
        <button class="on" aria-label="Orto"><svg class="sm"><path class="wt" d="M4 3v30h30M4 22h10v11"/></svg></button>
        <button aria-label="Polar"><svg class="sm"><circle class="wt" cx="15" cy="20" r="12"/><path class="wt" d="M15 20h20M15 20L29 4"/></svg></button>
        <button class="arr" aria-label="Opciones"><i class="tri lg"></i></button>
        <button aria-label="Dibujo isométrico"><svg class="sm"><path stroke="#63c88c" stroke-width="2" d="M18 3v30"/><path stroke="#e0696b" stroke-width="2" d="M6 4l24 28"/><circle cx="18" cy="18" r="3" fill="#fff"/></svg></button>
        <button class="arr" aria-label="Opciones"><i class="tri lg"></i></button>
      </div>
      <div class="grp tight">
        <button class="on" aria-label="Rastreo"><svg class="sm"><path class="wt" d="M26 5L5 30h29"/><circle cx="16" cy="18" r="4" fill="#fff"/></svg></button>
        <button class="on" aria-label="Referencia a objetos"><svg class="sm"><path class="wt" d="M3 3h9v9H3zM16 6h17v27H7V16"/></svg></button>
        <button class="arr" aria-label="Opciones"><i class="tri lg"></i></button>
      </div>
      <div class="grp">
        <button class="on" aria-label="Objetos de anotación"><svg class="sm"><use href="#person" width="34" height="36"/><circle class="wt" cx="29" cy="10" r="5"/></svg></button>
        <button aria-label="Añadir escalas"><svg class="sm"><use href="#person" width="34" height="36"/><path fill="#dcdee0" d="M30 1l-8 9h5l-2 7 9-9h-5z"/></svg></button>
        <button aria-label="Escala de anotación"><svg class="sm"><use href="#person" width="36" height="36"/></svg></button>
        <button class="scale">1:1<i class="tri lg"></i></button>
      </div>
      <div class="grp"><button aria-label="Espacio de trabajo"><svg class="sm"><circle cx="18" cy="18" r="9" fill="none" stroke="#dcdee0" stroke-width="6"/><circle cx="18" cy="18" r="13" fill="none" stroke="#dcdee0" stroke-width="5" stroke-dasharray="5 5"/></svg></button><button class="arr" aria-label="Opciones"><i class="tri lg"></i></button></div>
      <div class="grp tight"><button aria-label="Añadir"><svg class="sm"><path stroke="#eee" stroke-width="3" d="M18 2v32M2 18h32"/></svg></button></div>
      <div class="grp hidden-grp"></div>
      <div class="grp"><button aria-label="Limpiar pantalla"><svg class="sm"><path fill="none" stroke="#eee" stroke-width="2" d="M2 7h32v22H2z"/><path fill="none" stroke="#eee" stroke-width="2" d="M20 16l8-6M28 16v-6h-6M16 20l-8 6M8 20v6h6"/></svg></button><button aria-label="Personalización"><svg class="sm"><path stroke="#eee" stroke-width="3" d="M2 6h32M2 18h32M2 30h32"/></svg></button></div>
    </div>
  </footer>
</div>
</div>

<div class="badge"><svg width="206" height="206" viewBox="0 0 206 206"><path fill="#c80000" d="M75 69l28 36 27-36 22 33-26 35H79l-26-35z"/></svg></div>
</body>
</html>
```
FILE: styles.css
```css
* { box-sizing: border-box; }
html, body { margin: 0; height: 100%; }
body {
  background: #212631;
  color: #e2e4e6;
  font: 22px/30px "Open Sans", "Noto Sans", sans-serif;
  overflow: hidden;
  position: relative;
}
button, select, input { font: inherit; color: inherit; background: none; border: 0; padding: 0; margin: 0; }
button { white-space: nowrap; }
svg { display: block; flex: none; }
.defs { position: absolute; width: 0; height: 0; }
h2 { margin: 0; font: inherit; }
hr { border: 0; width: 2px; margin: 8px 0 4px; background: #28303b; flex: none; }
.tri { width: 10px; height: 7px; background: #dcdee0; clip-path: polygon(0 0, 100% 0, 50% 100%); flex: none; display: inline-block; }
.tri.lg { width: 16px; height: 9px; }
.ln { stroke: #f2f3f4; stroke-width: 2; fill: none; }
.wt { stroke: #dcdee0; stroke-width: 2; fill: none; }
.rd { stroke: #d9686b; stroke-width: 2; fill: none; }
.sm { width: 36px; height: 36px; }
.ic { width: 64px; height: 68px; overflow: visible; }
.slash { stroke: #4b5461; stroke-width: 2; }

.frame { height: calc(100vh - 88px); padding: 0 4px; background: #02060c; }
.app {
  height: 100%;
  display: flex;
  flex-direction: column;
  background: #212832;
  border: 3px solid #2b7197;
  border-top: 4px solid #3a87b3;
  border-bottom: 0;
}

/* title bar */
.titlebar { height: 52px; display: flex; align-items: center; padding-left: 5px; position: relative; flex: none; }
.logo { margin-right: 18px; }
.quick { display: flex; align-items: center; gap: 12px; }
.quick .mini { width: 12px; display: flex; justify-content: center; }
.layerbox { margin-left: 10px; width: 356px; height: 40px; background: #38424f; display: flex; align-items: center; padding: 0 6px 0 4px; }
.layerbox svg { width: 120px; }
.layerbox select { flex: 1; padding-left: 9px; }
.layerbox .tri { width: 14px; height: 9px; }
select { appearance: none; min-width: 0; outline: 0; }
.swatch { width: 28px; height: 30px; background: #000; border: 2px solid #c8cbd0; }
.more { margin: 0 17px 0 8px; }
.share { color: #74c4fb; text-decoration: none; display: flex; align-items: center; gap: 6px; }
.doc-title { position: absolute; left: 0; right: 0; top: 9px; text-align: center; padding-right: 24px; color: #e6e7e9; pointer-events: none; }

.menubar { height: 42px; padding: 4px 9px 2px; border-bottom: 2px solid #333c48; display: flex; align-items: center; color: #b4b9bf; flex: none; }
.menubar > button { padding: 0 25px; }
.wincontrols { margin-left: auto; display: flex; align-items: center; gap: 8px; }

.ribbon-tabs { height: 46px; display: flex; align-items: flex-end; padding-left: 10px; color: #b4b9bf; flex: none; }
.ribbon-tabs button { height: 38px; padding: 0 21px 0 22px; }
.ribbon-tabs .active { background: #0a96d6; color: #fff; height: 38px; padding: 0 19px; margin: 0 20px 0 1px; }

/* ribbon */
.ribbon { height: 200px; margin: 0 7px; background: #38424f; border: 4px solid #35789c; border-width: 4px 2px; display: flex; flex: none; color: #eceded; }
.panel { display: flex; flex-direction: column; border-right: 2px solid #28303b; flex: none; }
.panel:last-child { border-right: 0; }
.panel-body { height: 156px; display: flex; }
.panel-title { height: 36px; display: flex; align-items: center; justify-content: center; gap: 14px; position: relative; }
.launcher { position: absolute; right: 8px; top: 14px; }
.big { display: flex; flex-direction: column; align-items: center; padding-top: 12px; flex: none; line-height: 31px; text-align: center; border: 2px solid transparent; border-width: 0 2px; }
.big .ic { margin-bottom: 5px; }
.big .tri { margin-top: 5px; }
.big.pressed { margin-top: 7px; height: 146px; padding-top: 3px; border: 2px solid #7ab8e8; background: #43597a; }
.disabled { color: #69717d; }
.w92 { width: 92px; } .w94 { width: 94px; } .w108 { width: 108px; } .w116 { width: 116px; } .w120 { width: 120px; }
.w132 { width: 132px; } .w133 { width: 133px; } .w134 { width: 134px; } .w158 { width: 158px; } .w160 { width: 160px; }
.w168 { width: 168px; } .w178 { width: 178px; }
.w301 { width: 301px; } .w301 .panel-body { padding-left: 3px; } .w301 hr { margin-left: 6px; margin-right: 4px; } .w301 .w92 { width: 91px; }
.w608 { width: 608px; } .w458 { width: 458px; } .w611 { width: 611px; } .w437 { width: 437px; } .w536 { width: 536px; }
.w611 hr { margin-left: auto; margin-right: 14px; }
.w611 .pressed { margin-left: 4px; margin-right: 1px; }
.w437 hr { margin-left: 17px; }
.grid4 { display: grid; grid-template-columns: repeat(4, 36px); grid-auto-rows: 36px; gap: 12px; padding: 13px 16px 0 4px; }
.grid2 { display: grid; grid-template-columns: repeat(2, 36px); grid-auto-rows: 36px; gap: 12px; padding: 13px 17px 0 14px; }
.rows { display: flex; flex-direction: column; gap: 12px; padding: 12px 0 0 18px; }
.rows.first { padding-left: 12px; }
.rows button { display: flex; align-items: center; gap: 9px; height: 36px; }
.fx { font-family: "Liberation Serif", serif; font-style: italic; fill: #e2e4e6; }
.vis-icons { display: flex; gap: 16px; padding: 13px 0 8px 4px; }
.vis-select { width: 398px; height: 44px; display: flex; align-items: center; padding: 0 3px; background: #465064; border: 2px solid #2f3845; color: #b3b8bf; }
.vis-select select, .type-select select { flex: 1; }

.doc-tabs { height: 54px; padding: 6px 0 0 23px; display: flex; align-items: center; flex: none; }
.dt { height: 48px; padding: 0 16px 2px; display: flex; align-items: center; gap: 20px; }
.dt.active { background: #38424f; font-weight: 600; padding: 0 24px 2px 35px; clip-path: polygon(20px 0, 100% 0, calc(100% - 20px) 100%, 0 100%); }
.slash.gap { margin-left: 26px; }

/* workspace */
.workspace { flex: 1; min-height: 0; background: #38424f; padding: 8px 5px 0; display: flex; }
.palette { margin: 4px 0 12px; flex: none; }
.pal-head { height: 40px; background: #2c313d; border-radius: 8px 8px 0 0; padding: 0 0 4px 11px; display: flex; align-items: center; gap: 14px; line-height: 34px; }
.grip { width: 6px; height: 20px; background: repeating-linear-gradient(#9a9fa6 0 2px, transparent 2px 5px); }
.authoring { width: 534px; display: flex; }
.pal-main { flex: 1; display: flex; flex-direction: column; min-width: 0; }
.pal-main .pal-head { font-size: 21px; }
.authoring .pal-body { flex: 1; min-height: 0; overflow: hidden; display: flex; border-bottom: 2px solid #2c3440; border-radius: 0 0 8px 8px; }
.scroll { width: 10px; margin: 12px 17px 150px 6px; background: #252d37; border-radius: 5px; flex: none; }
.tools { list-style: none; margin: 0 0 10px; padding: 8px 0 0; overflow: hidden; }
.tools li { height: 84px; display: flex; align-items: center; gap: 9px; line-height: 32px; }
.tools svg { width: 64px; height: 72px; }
.tools span { width: 330px; }
.side-tabs { width: 41px; padding-top: 43px; }
.side-tabs button { display: block; writing-mode: vertical-rl; transform: rotate(180deg); width: 41px; height: 243px; background: #2c313d; border: 2px solid #252b36; border-radius: 8px 0 0 8px; color: #b4b9bf; }
.side-tabs .active { background: #38424f; color: #e2e4e6; border-right-color: #38424f; }

.props { width: 595px; margin-left: 11px; margin-right: 8px; }
.props .pal-body { padding: 25px 22px 0 34px; height: calc(100% - 40px); border-bottom: 2px solid #2c3440; border-radius: 0 0 8px 8px; }
.props-top { display: flex; align-items: center; gap: 13px; height: 46px; margin-bottom: 7px; }
.type-select { width: 396px; height: 46px; background: #4a566c; border: 2px solid #2c3440; display: flex; align-items: center; padding: 0 4px 0 6px; margin-right: 2px; }
section + section { margin-top: 8px; }
.sec { width: 100%; height: 38px; background: #2c313d; color: #fff; font-weight: 700; display: flex; align-items: center; justify-content: space-between; padding: 0 16px 2px 13px; }
table { width: calc(100% - 33px); margin-left: 33px; border-spacing: 0; table-layout: fixed; border-left: 2px solid #2c3440; }
th, td { height: 38px; padding: 0; font-weight: 400; text-align: left; border-bottom: 2px solid #2c3440; border-right: 2px solid #2c3440; line-height: 30px; white-space: nowrap; }
th { padding: 4px 0 0 12px; color: #c3c8cd; }
td { width: 176px; padding: 2px 0 0 6px; color: #eceeef; overflow: hidden; }
td.dim { color: #8d939c; }
.chip { display: inline-block; width: 28px; height: 28px; background: #000; border: 2px solid #d4d6d8; vertical-align: middle; margin: 0 14px 0 1px; }
.dash { display: inline-block; width: 76px; height: 2px; background: #d4d6d8; vertical-align: middle; margin: 0 9px 0 1px; }

.stage { flex: 1; min-width: 0; display: flex; flex-direction: column; }
.canvas { flex: 1; min-height: 0; position: relative; background: #9c9c9c; overflow: hidden; }
.drawing { width: 100%; height: 100%; }
.cad { font: 60px "Liberation Sans", Arial, sans-serif; fill: #050505; }
.cad.sel { fill: #04122c; stroke: #6f93cf; stroke-width: 3; paint-order: stroke; }
.stroke-font { font: 200 35px "DejaVu Sans", sans-serif; fill: #1e14b4; stroke: #1e14b4; stroke-width: 1; }
.ucs-font { font: 200 35px "DejaVu Sans", sans-serif; fill: #1a1a1a; stroke: #1a1a1a; stroke-width: 1; }
.viewcube { position: absolute; right: 36px; top: 24px; }
.cube { font-size: 18px; font-weight: 700; fill: #686c70; text-anchor: middle; }
.compass { font-size: 40px; font-weight: 700; fill: #d2d2d2; stroke: #868686; stroke-width: 2; paint-order: stroke; text-anchor: middle; }
.ucs-menu { position: absolute; right: 120px; top: 339px; width: 92px; height: 34px; border-radius: 8px; background: #bfc0cc; color: #70747e; font-size: 20px; display: flex; align-items: center; justify-content: space-between; padding: 0 9px 2px 10px; }
.navbar { position: absolute; right: 5px; top: 421px; }

.command { height: 118px; margin: 8px 0 10px; background: #2c313d; display: flex; flex: none; }
.cmd-side { width: 50px; display: flex; flex-direction: column; align-items: center; gap: 14px; padding-top: 8px; flex: none; }
.cmd-side button + button { margin-top: 4px; }
.cmd-main { flex: 1; display: flex; flex-direction: column; padding: 2px 0; gap: 3px; min-width: 0; }
.cmd-log { height: 73px; background: #c6c6c6; color: #111; font: 23px/30px "DejaVu Sans Mono", monospace; padding: 11px 4px 0; }
.cmd-line { flex: 1; background: #fcfcfc; display: flex; align-items: center; gap: 12px; padding-left: 7px; }
.cmd-line input { flex: 1; height: 36px; color: #222; outline: 0; font: italic 23px "DejaVu Sans Mono", monospace; }
.cmd-line input::placeholder { color: #828282; opacity: 1; }

/* status bar */
.status { height: 58px; display: flex; justify-content: space-between; padding: 0 10px 0 22px; flex: none; background: #1f2630; }
.layouts { display: flex; align-items: center; height: 48px; }
.layouts button { height: 48px; }
.layouts .active { background: #38424f; color: #fff; font-weight: 700; padding: 0 34px; clip-path: polygon(20px 0, 100% 0, calc(100% - 20px) 100%, 0 100%); margin-right: 16px; }
.layouts .slash { margin: 0 16px; }
.layouts .plus { padding: 0 4px; }
.toggles { display: flex; gap: 6px; padding: 3px 0 5px; }
.grp { display: flex; gap: 2px; align-items: center; background: #38424f; }
.grp button { height: 44px; min-width: 46px; display: flex; align-items: center; justify-content: center; }
.grp .arr { min-width: 32px; }
.grp .on { background: #5a8dc4; color: #fff; }
.grp .on .wt { stroke: #fff; }
.grp .model { padding: 0 7px; }
.grp .scale { padding: 0 9px 0 10px; gap: 6px; }
.tight { margin-left: -5px; }
.hidden-grp { width: 153px; }

.badge { position: absolute; right: 87px; bottom: 77px; width: 206px; height: 206px; border-radius: 50%; background: radial-gradient(#fff 62%, #f0f0f0 70%); }
```
